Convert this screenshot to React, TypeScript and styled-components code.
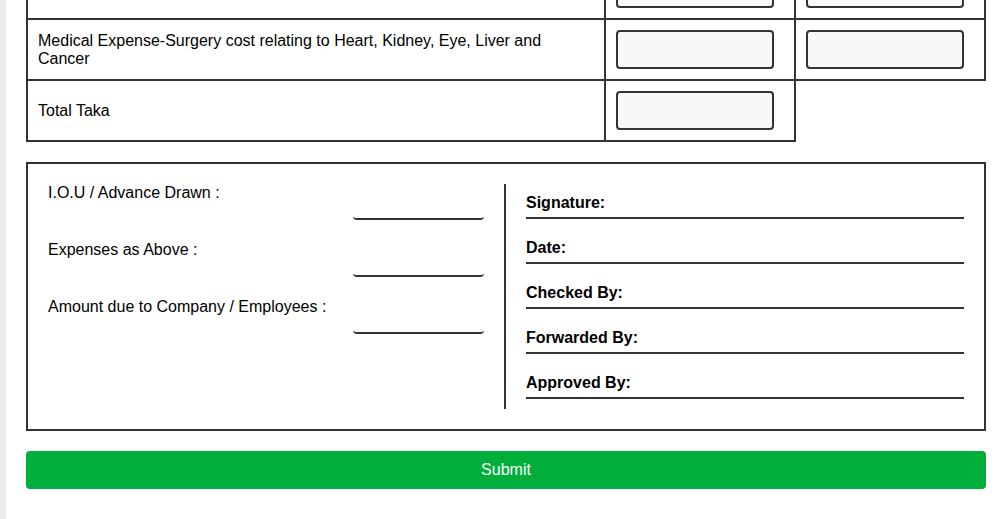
import React from "react";
import styled, { createGlobalStyle } from "styled-components";

const GlobalStyle = createGlobalStyle`
  html, body {
    margin: 0;
    padding: 0;
    background: #ffffff;
    font-family: "Liberation Sans", Arial, sans-serif;
    font-size: 16px;
    color: #000;
    overflow: hidden;
  }
  * { box-sizing: border-box; }
`;

const Shell = styled.div`
  display: flex;
  min-height: 100vh;
`;

const SideStrip = styled.div`
  flex: 0 0 6px;
  background: #ececec;
`;

const Main = styled.main`
  flex: 1;
  padding: 0 18px 40px 20px;
  margin-top: -43px;
`;

const ExpenseTable = styled.table`
  width: 100%;
  border-collapse: collapse;
  table-layout: fixed;
`;

const Cell = styled.td`
  border: 2px solid #333;
  padding: 10px;
  height: 61px;
  vertical-align: middle;
  line-height: 18px;
`;

const AmountInput = styled.input`
  display: block;
  width: 158px;
  height: 39px;
  border: 2px solid #333;
  border-radius: 4px;
  background: #f8f8f8;
  font: inherit;
`;

const Summary = styled.section`
  margin-top: 20px;
  border: 2px solid #333;
  padding: 20px;
  display: flex;
`;

const LeftCol = styled.div`
  flex: 0 0 456px;
  padding-right: 20px;
`;

const FieldRow = styled.div`
  display: flex;
  justify-content: space-between;
  align-items: flex-start;
  height: 36px;
  margin-bottom: 21px;
`;

const FieldLabel = styled.label`
  line-height: 18px;
`;

const LineInput = styled.input`
  width: 131px;
  height: 36px;
  border: none;
  border-bottom: 2px solid #333;
  border-radius: 4px;
  background: transparent;
  font: inherit;
`;

const RightCol = styled.div`
  flex: 1;
  border-left: 2px solid #333;
  padding-left: 20px;
`;

const SignLine = styled.div`
  padding-top: 10px;
  padding-bottom: 5px;
  border-bottom: 2px solid #333;
  margin-bottom: 10px;
  font-weight: bold;
  line-height: 18px;
`;

const SubmitButton = styled.button`
  display: block;
  width: 100%;
  margin-top: 20px;
  height: 38px;
  border: none;
  border-radius: 4px;
  background: #00ae3b;
  color: #fff;
  font-family: "Liberation Sans", Arial, sans-serif;
  font-size: 16px;
  cursor: pointer;
`;

const rows: { id: string; label: string; cols: number }[] = [
  { id: "prev", label: "", cols: 2 },
  { id: "surgery", label: "Medical Expense-Surgery cost relating to Heart, Kidney, Eye, Liver and Cancer", cols: 2 },
  { id: "total", label: "Total Taka", cols: 1 },
];

const leftFields = [
  "I.O.U / Advance Drawn :",
  "Expenses as Above :",
  "Amount due to Company / Employees :",
];

const signFields = ["Signature:", "Date:", "Checked By:", "Forwarded By:", "Approved By:"];

export default function App() {
  return (
    <>
      <GlobalStyle />
      <Shell>
        <SideStrip />
        <Main>
          <ExpenseTable>
            <colgroup>
              <col />
              <col style={{ width: 190 }} />
              <col style={{ width: 190 }} />
            </colgroup>
            <tbody>
              {rows.map((r) => (
                <tr key={r.id}>
                  <Cell>{r.label}</Cell>
                  {Array.from({ length: r.cols }).map((_, i) => (
                    <Cell key={i}>
                      <AmountInput type="text" />
                    </Cell>
                  ))}
                </tr>
              ))}
            </tbody>
          </ExpenseTable>

          <Summary>
            <LeftCol>
              {leftFields.map((f) => (
                <FieldRow key={f}>
                  <FieldLabel>{f}</FieldLabel>
                  <LineInput type="text" />
                </FieldRow>
              ))}
            </LeftCol>
            <RightCol>
              {signFields.map((s) => (
                <SignLine key={s}>{s}</SignLine>
              ))}
            </RightCol>
          </Summary>

          <SubmitButton type="button">Submit</SubmitButton>
        </Main>
      </Shell>
    </>
  );
}
